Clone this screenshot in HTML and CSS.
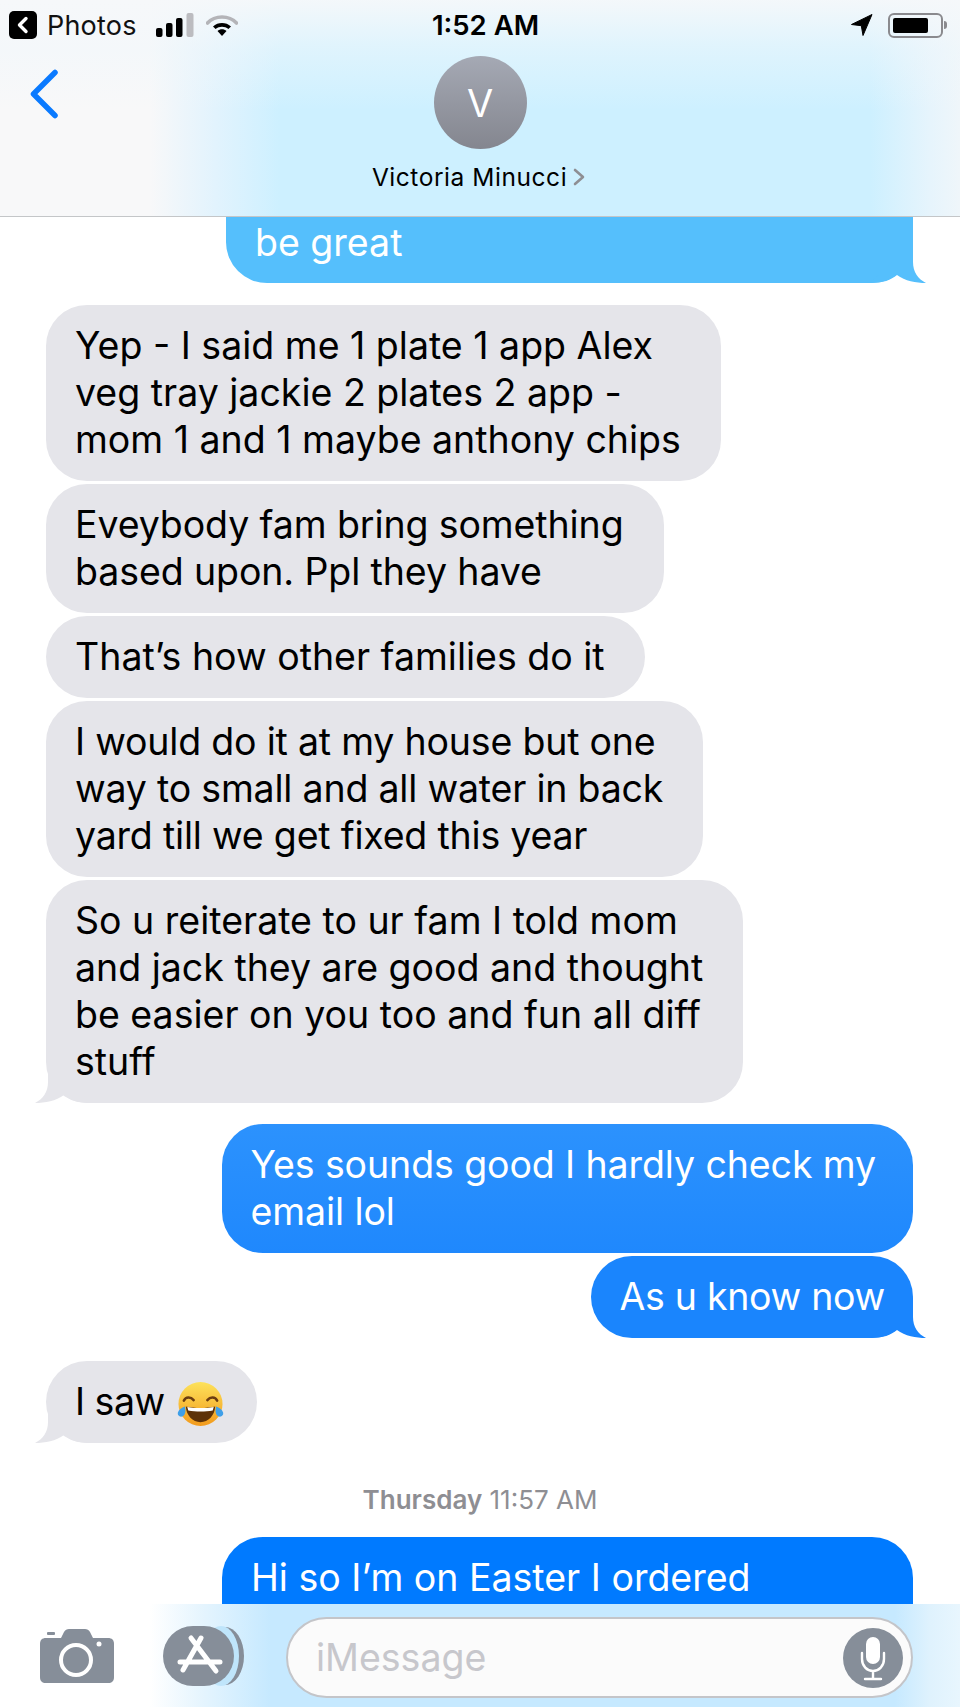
FILE: index.html
```html
<!DOCTYPE html>
<html lang="en">
<head>
<meta charset="utf-8">
<title>Messages</title>
<link rel="stylesheet" href="styles.css">
</head>
<body>
<div class="phone">
  <header class="header">
    <div class="status">
      <div class="status-left">
        <svg class="ret" viewBox="0 0 28 28"><rect width="28" height="28" rx="5" fill="#000"/><path d="M17 7.500 10.500 14l6.500 6.500" fill="none" stroke="#fff" stroke-width="3.400" stroke-linecap="round" stroke-linejoin="round"/></svg>
        <span class="app">Photos</span>
        <svg class="signal" viewBox="0 0 38 24"><rect x="0" y="15" width="6.500" height="9" rx="2"/><rect x="10" y="10" width="6.500" height="14" rx="2"/><rect x="20" y="5" width="6.500" height="19" rx="2"/><rect x="30.500" y="0" width="7" height="24" rx="2" fill="#bcbcc0"/></svg>
        <svg class="wifi" viewBox="0 0 32 24"><path d="M1.500 10C5 6.300 10 4 16 4s11 2.300 14.500 6" fill="none" stroke="#b4b4b8" stroke-width="3.600" stroke-linecap="round"/><path d="M7 13.500c5-4.600 13-4.600 18 0l-2.600 2.600c-3.600-3.200-9.200-3.200-12.800 0z"/><path d="M11.500 18c2.600-2.200 6.400-2.200 9 0L16 23z"/></svg>
      </div>
      <div class="clock">1:52 AM</div>
      <div class="status-right">
        <svg class="loc" viewBox="0 0 22 22"><path d="M21 .5 .5 10.500l9.800 1.200 1.700 9.800z" stroke="#000" stroke-linejoin="round"/></svg>
        <div class="battery"><span class="charge"></span></div>
        <span class="nub"></span>
      </div>
    </div>
    <div class="nav">
      <svg class="back" viewBox="0 0 30 50"><path d="M26 3.500 4.500 25 26 46.500" fill="none" stroke="#0a7aff" stroke-width="5.500" stroke-linecap="round" stroke-linejoin="round"/></svg>
      <div class="contact">
        <div class="avatar">V</div>
        <div class="name">Victoria Minucci<svg class="chev" viewBox="0 0 12 18"><path d="M2 2l8 7-8 7" fill="none" stroke="#8e8e93" stroke-width="2.600" stroke-linecap="round" stroke-linejoin="round"/></svg></div>
      </div>
    </div>
  </header>

  <main class="thread">
    <div class="bubble sent faded cut-top">be great<svg class="tail tail-r" viewBox="0 0 56 41"><path d="M43 0v20c0 10 5 17 13 21-10 0-21-2-29-8-6 5-14 8-27 8z" fill="#55bffc"/></svg></div>

    <div class="bubble recv">Yep - I said me 1 plate 1 app Alex<br>veg tray jackie 2 plates 2 app -<br>mom 1 and 1 maybe anthony chips</div>
    <div class="bubble recv tight-s">Eveybody fam bring something<br>based upon. Ppl they have</div>
    <div class="bubble recv">That’s how other families do it</div>
    <div class="bubble recv tight-m">I would do it at my house but one<br>way to small and all water in back<br>yard till we get fixed this year</div>
    <div class="bubble recv">So u reiterate to ur fam I told mom<br>and jack they are good and thought<br>be easier on you too and fun all diff<br>stuff<svg class="tail tail-l" viewBox="0 0 56 41"><path d="M13 0v20c0 10-5 17-13 21 10 0 21-2 29-8 6 5 14 8 27 8z" fill="#e5e5ea"/></svg></div>

    <div class="bubble sent mid wide tight-s">Yes sounds good I hardly check my<br>email lol</div>
    <div class="bubble sent mid2 tight-l">As u know now<svg class="tail tail-r" viewBox="0 0 56 41"><path d="M43 0v20c0 10 5 17 13 21-10 0-21-2-29-8-6 5-14 8-27 8z" fill="#1a85fd"/></svg></div>

    <div class="bubble recv lone">I saw <svg class="emoji" viewBox="0 0 48 48" role="img" aria-label="face with tears of joy"><defs><linearGradient id="face" x1="0" y1="0" x2="0" y2="1"><stop offset="0" stop-color="#fde25b"/><stop offset="1" stop-color="#f29a1c"/></linearGradient></defs><circle cx="24" cy="23.500" r="22.500" fill="url(#face)"/><path d="M7 20c2-4 7-4 10-.500M31 19.500c3-3.500 8-3.500 10 .500" fill="none" stroke="#6b3d10" stroke-width="2.600" stroke-linecap="round"/><path d="M9 26c9 2 21 2 30 0-.5 9-7 16-15 16S9.500 35 9 26z" fill="#5d3208"/><path d="M10.500 26.500c8 1.600 19 1.600 27 0l-1 3.500c-7.500 1.500-17.500 1.500-25 0z" fill="#fff"/><path d="M1 32c1-3 4-5 7-6 1 4 1 8-2 10-3 1.500-6-1-5-4zM47 32c-1-3-4-5-7-6-1 4-1 8 2 10 3 1.500 6-1 5-4z" fill="#3f9fe8"/></svg><svg class="tail tail-l" viewBox="0 0 56 41"><path d="M13 0v20c0 10-5 17-13 21 10 0 21-2 29-8 6 5 14 8 27 8z" fill="#e5e5ea"/></svg></div>

    <div class="stamp"><b>Thursday</b> 11:57 AM</div>

    <div class="bubble sent strong cut-bottom">Hi so I’m on Easter I ordered</div>
  </main>

  <footer class="footer">
    <svg class="camera" viewBox="0 0 76 56"><path d="M7 10h15l3-6c1-2 3-3 5-3h16c2 0 4 1 5 3l3 6h15c4 0 6 2 6 6v33c0 4-2 6-6 6H7c-4 0-6-2-6-6V16c0-4 2-6 6-6z" fill="#868e99"/><rect x="8" y="4" width="8" height="3" rx="1" fill="#868e99"/><circle cx="37" cy="32" r="15" fill="none" stroke="#fff" stroke-width="4"/><circle cx="60" cy="16" r="2.500" fill="#fff"/></svg>
    <svg class="store" viewBox="0 0 82 62"><ellipse cx="62" cy="31" rx="19" ry="29" fill="#868e99"/><ellipse cx="58" cy="31" rx="18" ry="30" fill="#bfe5fb"/><rect x="0" y="1" width="71" height="60" rx="30" fill="#868e99"/><path d="M38 13 20 45M28 13l25 33M17 37h40" fill="none" stroke="#fff" stroke-width="5" stroke-linecap="round"/></svg>
    <div class="input">
      <span class="placeholder">iMessage</span>
      <svg class="mic" viewBox="0 0 60 60"><circle cx="30" cy="30" r="30" fill="#868e99"/><rect x="23" y="9" width="14" height="27" rx="7" fill="#fff"/><path d="M19 25v6c0 7 5 12 11 12s11-5 11-12v-6M30 43v8M22 51h16" fill="none" stroke="#fff" stroke-width="2.400" stroke-linecap="round"/></svg>
    </div>
  </footer>
</div>
</body>
</html>
```
FILE: styles.css
```css
* { box-sizing: border-box; }
html, body { margin: 0; padding: 0; background: #fff; }
body { font-family: Inter, "Liberation Sans", sans-serif; color: #000; }

.phone {
  width: 960px;
  height: 1707px;
  display: flex;
  flex-direction: column;
  overflow: hidden;
}

/* header */
.header {
  flex: 0 0 217px;
  height: 217px;
  border-bottom: 1px solid #c4c6c8;
  background:
    linear-gradient(to bottom, rgba(246,248,250,.95) 0, rgba(240,247,251,.5) 50px, rgba(240,247,251,0) 110px),
    linear-gradient(to right, #f8f8f9 0, #f8f8f9 150px, #e2f3fd 215px, #cdf0ff 280px, #cdf0ff 870px, #e6f4fc 930px, #eff6fa 960px);
}
.status {
  height: 50px;
  padding: 0 13px 0 9px;
  display: grid;
  grid-template-columns: 1fr auto 1fr;
  align-items: center;
}
.status-left, .status-right { display: flex; align-items: center; }
.status-right { justify-content: flex-end; }
.ret { width: 28px; height: 28px; margin-right: 10px; }
.app { font-size: 27px; letter-spacing: .2px; margin-right: 19px; color: #111; }
.signal { width: 38px; height: 24px; margin-right: 12px; }
.wifi { width: 32px; height: 24px; }
.clock { font-size: 27.5px; font-weight: 600; margin-left: 15px; }
.loc { width: 22px; height: 22px; margin-right: 15px; }
.battery {
  width: 55px;
  height: 25px;
  padding: 3px;
  border: 2px solid #8a8a8e;
  border-radius: 6px;
}
.charge { display: block; width: 35px; height: 100%; background: #000; border-radius: 2px; }
.nub { width: 3px; height: 8px; margin-left: 1px; background: #8a8a8e; border-radius: 0 3px 3px 0; }

.nav {
  display: grid;
  grid-template-columns: 1fr auto 1fr;
  padding-top: 6px;
}
.back { width: 30px; height: 50px; margin: 13px 0 0 29px; }
.contact { display: flex; flex-direction: column; align-items: center; grid-column: 2; }
.avatar {
  width: 93px;
  height: 93px;
  border-radius: 50%;
  background: linear-gradient(to bottom, #a5a9b4, #84868f);
  color: #fff;
  font-size: 38px;
  display: flex;
  align-items: center;
  justify-content: center;
}
.name {
  margin: 13px 3px 0 0;
  font-size: 24.5px;
  line-height: 30px;
  letter-spacing: .55px;
  display: flex;
  align-items: center;
}
.chev { width: 12px; height: 18px; margin-left: 6px; }

/* thread */
.thread {
  flex: 1;
  display: flex;
  flex-direction: column;
  min-height: 0;
  overflow: hidden;
}
.bubble {
  position: relative;
  width: fit-content;
  flex: none;
  padding: 17px 40px 18px 29px;
  font-size: 37.5px;
  line-height: 47px;
  border-radius: 41px;
  margin-top: 3px;
  white-space: nowrap;
}
.recv { background: #e5e5ea; margin-left: 46px; }
.recv:nth-child(2) { margin-top: 22px; }
.sent { color: #fff; margin-left: auto; margin-right: 47px; padding-right: 28px; }
.faded { background: #55bffc; margin-top: 0; padding-top: 2px; min-width: 687px; }
.mid { background: linear-gradient(to bottom, #2c92fd, #1f88fd); }
.wide { margin-top: 21px; padding-right: 37px; }
.mid2 { background: #1a85fd; }
.lone { margin-top: 23px; letter-spacing: -.5px; }
.tight-s { letter-spacing: -.1px; }
.tight-m { letter-spacing: -.2px; }
.tight-l { letter-spacing: -.3px; }
.strong { background: #007aff; min-width: 691px; }
.cut-top { border-top-left-radius: 0; border-top-right-radius: 0; height: 66px; }
.cut-bottom { border-bottom-left-radius: 0; border-bottom-right-radius: 0; height: 67px; margin-top: 22px; }
.tail { position: absolute; bottom: 0; width: 56px; height: 41px; }
.tail-r { right: -13px; }
.tail-l { left: -11px; }
.emoji { width: 47px; height: 47px; vertical-align: -7px; margin: -6px -7px -6px 2px; }
.stamp {
  margin-top: 42px;
  text-align: center;
  font-size: 26px;
  line-height: 30px;
  color: #8e8e93;
}
.stamp b { font-weight: 600; }

/* footer */
.footer {
  flex: 0 0 103px;
  display: flex;
  align-items: flex-start;
  padding: 13px 47px 0 39px;
  background: linear-gradient(to right, #fff 0, #fff 150px, #e6f5fe 200px, #c6e9ff 270px, #c6e9ff 895px, #dff2fd 930px, #e8f6fe 960px);
}
.camera { width: 76px; height: 56px; margin: 11px 48px 0 0; }
.store { width: 82px; height: 62px; margin: 8px 41px 0 0; }
.input {
  flex: 1;
  height: 81px;
  border: 2px solid #c4c5c9;
  border-radius: 41px;
  background: #fbfbfb;
  display: flex;
  align-items: center;
  justify-content: space-between;
  padding: 0 8px 0 28px;
}
.placeholder { font-size: 37.5px; color: #c7c7cc; }
.mic { width: 60px; height: 60px; }
```
